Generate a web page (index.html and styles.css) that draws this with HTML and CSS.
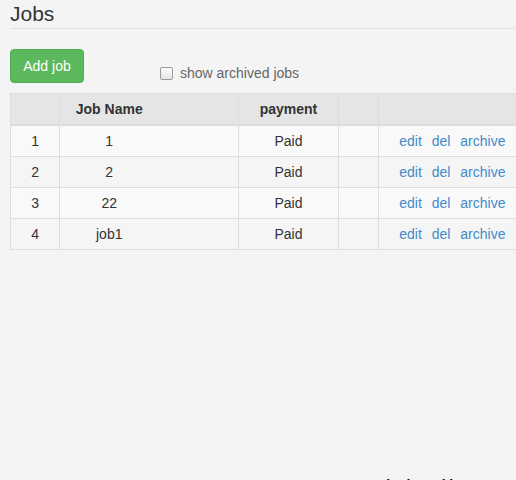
FILE: index.html
```html
<!DOCTYPE html>
<html>
<head>
<meta charset="utf-8">
<link rel="stylesheet" href="styles.css">
</head>
<body>
<div class="page">
  <h1 class="title">Jobs</h1>
  <div class="toolbar">
    <button class="btn-add">Add job</button>
    <label class="archived"><span class="check"></span>show archived jobs</label>
  </div>
  <table class="jobs">
    <thead>
      <tr>
        <th class="c-num"></th>
        <th class="c-name">Job Name</th>
        <th class="c-pay">payment</th>
        <th class="c-empty"></th>
        <th class="c-act"></th>
      </tr>
    </thead>
    <tbody>
      <tr>
        <td class="c-num">1</td><td class="c-name">1</td><td class="c-pay">Paid</td><td class="c-empty"></td>
        <td class="c-act"><a href="#">edit</a> <a href="#">del</a> <a href="#">archive</a></td>
      </tr>
      <tr>
        <td class="c-num">2</td><td class="c-name">2</td><td class="c-pay">Paid</td><td class="c-empty"></td>
        <td class="c-act"><a href="#">edit</a> <a href="#">del</a> <a href="#">archive</a></td>
      </tr>
      <tr>
        <td class="c-num">3</td><td class="c-name">22</td><td class="c-pay">Paid</td><td class="c-empty"></td>
        <td class="c-act"><a href="#">edit</a> <a href="#">del</a> <a href="#">archive</a></td>
      </tr>
      <tr>
        <td class="c-num">4</td><td class="c-name">job1</td><td class="c-pay">Paid</td><td class="c-empty"></td>
        <td class="c-act"><a href="#">edit</a> <a href="#">del</a> <a href="#">archive</a></td>
      </tr>
    </tbody>
  </table>
  <footer class="footer"><span class="f-main">Jobs board by team</span> <span class="f-year">2013</span></footer>
</div>
</body>
</html>
```

FILE: styles.css
```css
html, body {
  margin: 0;
  padding: 0;
  background: #f4f4f4;
  overflow: hidden;
}
body {
  font-family: "Liberation Sans", Arial, sans-serif;
  font-size: 14px;
  line-height: 20px;
  color: #333;
  width: 516px;
  height: 480px;
}
.page {
  padding: 0 0 0 10px;
}
.title {
  margin: 0;
  padding: 2px 0 3px 0;
  font-size: 21px;
  font-weight: normal;
  line-height: 23px;
  border-bottom: 1px solid #e3e3e3;
  color: #333;
}
.toolbar {
  display: flex;
  align-items: flex-start;
  margin-top: 20px;
  height: 44px;
}
.btn-add {
  font-family: inherit;
  font-size: 14px;
  line-height: 20px;
  color: #fff;
  background: #5cb85c;
  border: 1px solid #4cae4c;
  border-radius: 4px;
  padding: 6px 12px;
  width: 74px;
  height: 34px;
  margin: 0;
}
.archived {
  display: flex;
  align-items: center;
  margin-left: 76px;
  margin-top: 14px;
  color: #666;
}
.check {
  display: inline-block;
  width: 11px;
  height: 11px;
  border: 1px solid #9a9a9a;
  border-radius: 2px;
  background: linear-gradient(#fbfbfb, #e6e6e6);
  margin-right: 7px;
}
.jobs {
  border-collapse: collapse;
  width: 560px;
  table-layout: fixed;
}
.jobs th, .jobs td {
  border: 1px solid #ddd;
  padding: 5px 8px;
  height: 20px;
  text-align: center;
  white-space: nowrap;
}
.jobs thead th {
  background: #e5e5e5;
  font-weight: bold;
  border-bottom-width: 2px;
}
.jobs tbody tr:nth-child(odd) td {
  background: #f9f9f9;
}
.jobs tbody tr:nth-child(even) td {
  background: #f5f5f5;
}
.c-num { width: 32px; }
.jobs .c-name { padding-right: 88px; padding-left: 8px; width: 80px; }
.c-pay { width: 82px; }
.c-empty { width: 23px; }
.jobs .c-act { text-align: left; padding-left: 20px; width: 160px; }
.c-act a {
  color: #428bca;
  text-decoration: none;
  margin-right: 6px;
}
.footer {
  margin-top: 225px;
  padding-left: 360px;
  font-size: 14px;
  white-space: nowrap;
}
.f-main {
  font-weight: bold;
  color: #111;
}
.f-year {
  color: #777;
}
```
